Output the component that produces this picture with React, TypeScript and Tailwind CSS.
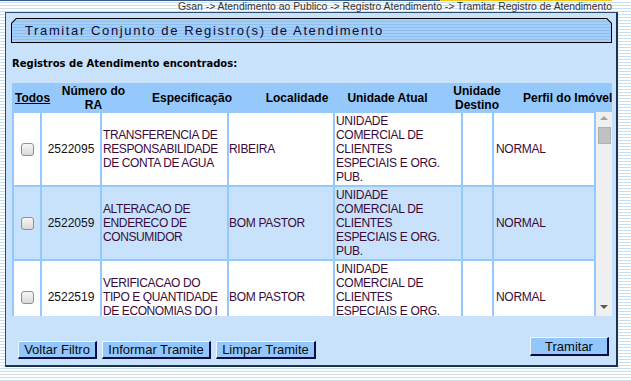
import React from "react";

type Row = {
  ra: string;
  espec: string[];
  loc: string;
  unid: string[];
  perfil: string;
  bg: string;
};

const rows: Row[] = [
  {
    ra: "2522095",
    espec: ["TRANSFERENCIA DE", "RESPONSABILIDADE", "DE CONTA DE AGUA"],
    loc: "RIBEIRA",
    unid: ["UNIDADE", "COMERCIAL DE", "CLIENTES", "ESPECIAIS E ORG.", "PUB."],
    perfil: "NORMAL",
    bg: "bg-white",
  },
  {
    ra: "2522059",
    espec: ["ALTERACAO DE", "ENDERECO DE", "CONSUMIDOR"],
    loc: "BOM PASTOR",
    unid: ["UNIDADE", "COMERCIAL DE", "CLIENTES", "ESPECIAIS E ORG.", "PUB."],
    perfil: "NORMAL",
    bg: "bg-[#c8e2fc]",
  },
  {
    ra: "2522519",
    espec: ["VERIFICACAO DO", "TIPO E QUANTIDADE", "DE ECONOMIAS DO I"],
    loc: "BOM PASTOR",
    unid: ["UNIDADE", "COMERCIAL DE", "CLIENTES", "ESPECIAIS E ORG.", "PUB."],
    perfil: "NORMAL",
    bg: "bg-white",
  },
];

function Lines({ lines }: { lines: string[] }) {
  return (
    <div>
      {lines.map((l, i) => (
        <div key={i} className="whitespace-nowrap">
          {l}
        </div>
      ))}
    </div>
  );
}

function Checkbox() {
  return (
    <div className="w-[13px] h-[13px] rounded-[3px] border border-[#8e8e8e] bg-gradient-to-b from-[#f6f6f6] to-[#d9d9d9]" />
  );
}

function Button({ label, w, h }: { label: string; w: string; h: string }) {
  return (
    <div
      className={`${w} ${h} flex items-center justify-center bg-[#93c6fa] border-t border-l border-t-[#eef6ff] border-l-[#eef6ff] border-b-2 border-r-2 border-b-[#0c0c45] border-r-[#0c0c45] text-[13px] leading-[15px] text-[#0a0a0a]`}
    >
      {label}
    </div>
  );
}

export default function App() {
  return (
    <div className="w-[631px] h-[381px] overflow-hidden bg-[repeating-linear-gradient(to_bottom,#ffffff_0px,#ffffff_2px,#c9e0f3_2px,#c9e0f3_3px)] font-['Liberation_Sans',Arial,sans-serif]">
      {/* top strip */}
      <div className="flex h-[1px]">
        <div className="w-[440px] bg-[#3b5f86]" />
        <div className="w-[172px] bg-[#f5c518]" />
      </div>
      {/* breadcrumb */}
      <div className="w-[612px] h-[11px] text-right text-[10.4px] leading-[11px] text-[#333333] whitespace-nowrap">
        Gsan -&gt; Atendimento ao Publico -&gt; Registro Atendimento -&gt; Tramitar Registro de Atendimento
      </div>

      {/* main panel */}
      <div className="ml-[5px] w-[613px] h-[355px] bg-[#c8e2fc] border-t border-l border-t-[#2d4d70] border-l-[#2d4d70] border-r-2 border-b-2 border-r-[#1c3350] border-b-[#1c3350]">
        {/* title bar */}
        <div className="mt-[5px] ml-[5px] w-[601px] h-[25px] bg-black [clip-path:polygon(5px_0,calc(100%_-_5px)_0,100%_5px,100%_100%,0_100%,0_5px)] p-[1px]">
          <div className="w-full h-full flex items-center pl-[13px] bg-[repeating-linear-gradient(to_bottom,#a4cff8_0px,#a4cff8_2px,#8dbff1_2px,#8dbff1_3px)] [clip-path:polygon(4.5px_0,calc(100%_-_4.5px)_0,100%_4.5px,100%_100%,0_100%,0_4.5px)]">
            <span className="text-[13px] leading-[15px] tracking-[1.62px] text-[#0b0b3a] whitespace-nowrap">
              Tramitar Conjunto de Registro(s) de Atendimento
            </span>
          </div>
        </div>

        {/* subtitle */}
        <div className="mt-[15px] ml-[6px] h-[12px] text-[10px] leading-[12px] font-bold font-['DejaVu_Sans',Verdana,sans-serif] text-black whitespace-nowrap">
          Registros de Atendimento encontrados:
        </div>

        {/* table header */}
        <div className="mt-[13px] ml-[6px] w-[600px] h-[29px] bg-[#95c8fb] grid grid-cols-[41px_81px_116px_94px_87px_92px_89px] items-center text-center font-bold text-[12px] leading-[14px] text-black">
          <div className="text-left pl-[3px] underline">Todos</div>
          <div>
            Número do
            <br />
            RA
          </div>
          <div>Especificação</div>
          <div>Localidade</div>
          <div className="whitespace-nowrap">Unidade Atual</div>
          <div>
            Unidade
            <br />
            Destino
          </div>
          <div className="whitespace-nowrap text-right">Perfil do Imóvel</div>
        </div>

        {/* table body */}
        <div className="ml-[6px] w-[600px] h-[204px] flex">
          <div className="w-[584px] h-[204px] overflow-hidden bg-[#95c8fb] pt-[1px] pl-[2px] pr-[2px] flex flex-col gap-[2px]">
            {rows.map((r, i) => (
              <div
                key={i}
                className="shrink-0 h-[72px] grid grid-cols-[26px_58px_125px_104px_126px_29px_100px] gap-x-[2px] text-[12px] leading-[14px]"
              >
                <div className={`${r.bg} flex items-center justify-center`}>
                  <Checkbox />
                </div>
                <div className={`${r.bg} flex items-center justify-center text-[#111111]`}>{r.ra}</div>
                <div className={`${r.bg} flex items-center pl-[1px] tracking-[-0.4px] text-[#3a0b3a] overflow-hidden`}>
                  <Lines lines={r.espec} />
                </div>
                <div className={`${r.bg} flex items-center pl-[0px] tracking-[-0.3px] text-[#3a0b3a] whitespace-nowrap`}>
                  {r.loc}
                </div>
                <div className={`${r.bg} flex items-center pl-[1px] tracking-[-0.3px] text-[#3a0b3a]`}>
                  <Lines lines={r.unid} />
                </div>
                <div className={`${r.bg}`} />
                <div className={`${r.bg} flex items-center pl-[2px] tracking-[-0.3px] text-[#3a0b3a]`}>{r.perfil}</div>
              </div>
            ))}
          </div>
          {/* scrollbar */}
          <div className="w-[16px] h-[204px] bg-[#f0f0f0] flex flex-col items-center pt-[4px] pb-[7px]">
            <div className="w-0 h-0 border-x-[4px] border-x-transparent border-b-[4px] border-b-[#a3a3a3]" />
            <div className="mt-[7px] w-[13px] h-[17px] bg-[#c1c1c1] border border-[#b0b0b0]" />
            <div className="flex-1" />
            <div className="w-0 h-0 border-x-[4px] border-x-transparent border-t-[4px] border-t-[#5a5a5a]" />
          </div>
        </div>

        {/* buttons */}
        <div className="mt-[21px] ml-[12px] w-[591px] flex items-start">
          <div className="mt-[4px] flex gap-[5px]">
            <Button label="Voltar Filtro" w="w-[79px]" h="h-[18px]" />
            <Button label="Informar Tramite" w="w-[109px]" h="h-[18px]" />
            <Button label="Limpar Tramite" w="w-[100px]" h="h-[18px]" />
          </div>
          <div className="flex-1" />
          <Button label="Tramitar" w="w-[79px]" h="h-[19px]" />
        </div>
      </div>
    </div>
  );
}
